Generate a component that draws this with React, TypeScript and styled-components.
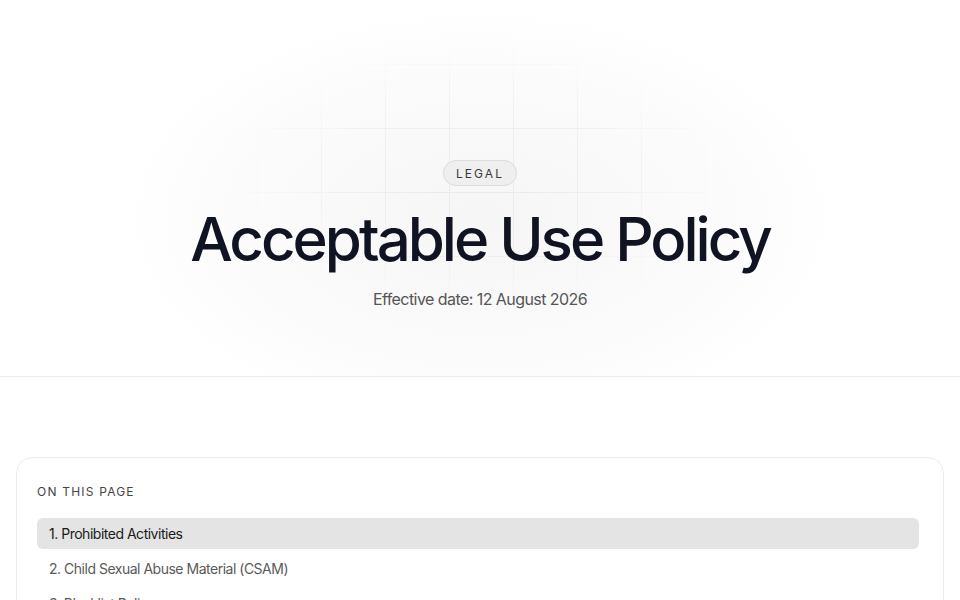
import React from 'react';
import styled, { createGlobalStyle } from 'styled-components';

const GlobalStyle = createGlobalStyle`
  * { box-sizing: border-box; }
  body {
    margin: 0;
    background: #ffffff;
    font-family: Inter, "Noto Sans", sans-serif;
    color: #111827;
  }
`;

const Hero = styled.header`
  position: relative;
  overflow: hidden;
  padding: 160px 16px 65px;
  border-bottom: 1px solid #ebebeb;
  text-align: center;
  background: radial-gradient(ellipse 360px 210px at 50% 58%, #f6f6f6 0%, #fafafa 55%, #ffffff 100%);
`;

const Grid = styled.div`
  position: absolute;
  inset: 0;
  pointer-events: none;
  background-image:
    linear-gradient(to right, #e9e9e9 1px, transparent 1px),
    linear-gradient(to bottom, #e9e9e9 1px, transparent 1px);
  background-size: 64px 64px;
  background-position: 1px 0;
  mask-image: radial-gradient(ellipse 250px 140px at 50% 48%, #000 0%, rgba(0,0,0,0.6) 50%, transparent 100%);
  -webkit-mask-image: radial-gradient(ellipse 250px 140px at 50% 48%, #000 0%, rgba(0,0,0,0.6) 50%, transparent 100%);
`;

const HeroInner = styled.div`
  position: relative;
  display: flex;
  flex-direction: column;
  align-items: center;
`;

const Badge = styled.span`
  display: inline-flex;
  align-items: center;
  height: 26px;
  padding: 0 12px;
  border-radius: 999px;
  border: 1px solid #dcdcdc;
  background: #efefef;
  color: #3a3a3a;
  font-size: 12px;
  font-weight: 400;
  letter-spacing: 0.17em;
  text-transform: uppercase;
`;

const Title = styled.h1`
  margin: 19px 0 0;
  font-size: 60px;
  line-height: 68px;
  font-weight: 500;
  letter-spacing: -0.05em;
  color: #0f1322;
`;

const EffectiveDate = styled.p`
  margin: 14px 0 0;
  font-size: 16px;
  line-height: 24px;
  color: #555;
  letter-spacing: -0.035em;
`;

const Main = styled.main`
  padding: 80px 16px 40px;
`;

const TocCard = styled.nav`
  border: 1px solid #ececec;
  border-radius: 16px;
  padding: 24px 24px 24px 20px;
  background: #fff;
`;

const TocLabel = styled.div`
  font-size: 12px;
  line-height: 20px;
  font-weight: 400;
  letter-spacing: 0.1em;
  text-transform: uppercase;
  color: #444;
`;

const TocList = styled.ol`
  list-style: none;
  margin: 16px 0 0;
  padding: 0;
  display: flex;
  flex-direction: column;
  gap: 4px;
`;

const TocItem = styled.li<{ $active?: boolean }>`
  height: 31px;
  display: flex;
  align-items: center;
  padding: 0 12px;
  border-radius: 6px;
  font-size: 14px;
  letter-spacing: -0.035em;
  color: ${p => (p.$active ? '#1a1a1a' : '#5a5a5a')};
  background: ${p => (p.$active ? '#e4e4e4' : 'transparent')};
`;

const sections = [
  'Prohibited Activities',
  'Child Sexual Abuse Material (CSAM)',
  'Blacklist Policy',
  'Enforcement',
  'Reporting Violations',
];

export default function App() {
  return (
    <>
      <GlobalStyle />
      <Hero>
        <Grid />
        <HeroInner>
          <Badge>Legal</Badge>
          <Title>Acceptable Use Policy</Title>
          <EffectiveDate>Effective date: 12 August 2026</EffectiveDate>
        </HeroInner>
      </Hero>
      <Main>
        <TocCard>
          <TocLabel>On this page</TocLabel>
          <TocList>
            {sections.map((s, i) => (
              <TocItem key={s} $active={i === 0}>
                {i + 1}. {s}
              </TocItem>
            ))}
          </TocList>
        </TocCard>
      </Main>
    </>
  );
}
